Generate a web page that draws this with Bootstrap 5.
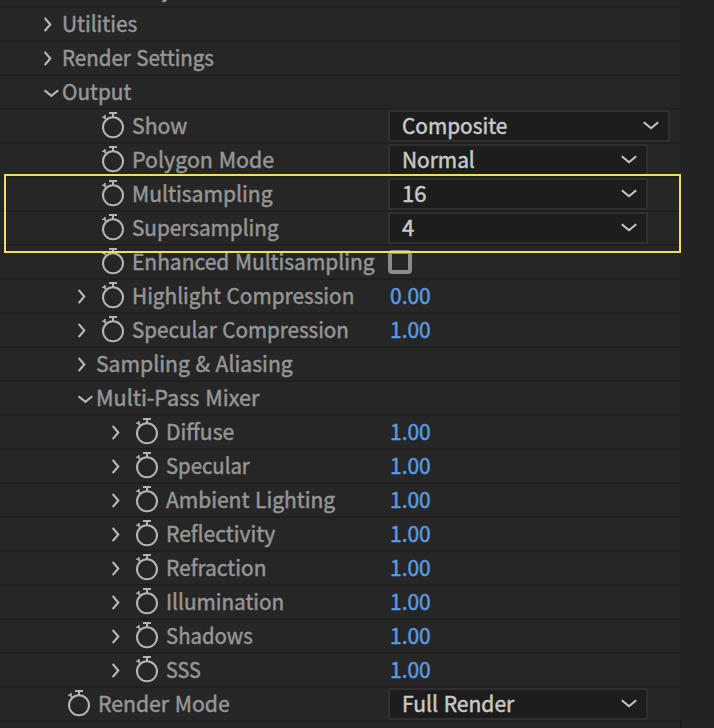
<!DOCTYPE html>
<html lang="en">
<head>
<meta charset="utf-8">
<meta name="viewport" content="width=device-width, initial-scale=1">
<title>Effect Controls</title>
<link href="https://cdn.jsdelivr.net/npm/bootstrap@5.3.0/dist/css/bootstrap.min.css" rel="stylesheet">
<style>
body{background:#232323;color:#969696;font:22px/32px "Noto Sans CJK SC","Noto Sans",sans-serif;height:728px;-webkit-text-stroke:.5px currentColor}
.panel{width:680px;height:728px;background:#262626}
.rows{margin-top:-28px}
.prop{height:34px;border-top:2px solid #1f1f1f;white-space:nowrap}
.prop-name{width:388px;padding-left:44px}
.lv1{padding-left:78px}
.lv2{padding-left:112px}
.chev{width:18px;height:18px;color:#b9b9b9}
.watch{width:24px;height:28px;margin:-2px 7px 0 5px;color:#b4b4b4}
.picker{width:260px;height:32px;padding:0 9px 0 12px;background:#1d1d1d;border:2px solid #303030;color:#c9c9c9}
.picker.wide{width:282px}
.num{color:#5a9ae0;padding-left:2px}
.tick{width:24px;height:24px;border:4px solid #8c8c8c;border-radius:4px}
.mark-box{left:4px;top:174px;width:677px;height:79px;border:2px solid #efdf61}
.lbl{display:block;transform-origin:0 50%;word-spacing:1px;margin-top:-4px}
.prop:first-child .lbl{margin-top:-6px}
.foot{left:680px;top:720px;width:34px;height:8px;border-left:2px solid #1d1d1d;background:#252525}
</style>
<script src="https://cdn.jsdelivr.net/npm/bootstrap@5.3.0/dist/js/bootstrap.bundle.min.js"></script>
</head>
<body class="m-0 overflow-hidden position-relative">
<svg class="d-none">
<symbol id="right" viewBox="0 0 18 18"><path d="M.7 3l5.6 6.5L.7 16" fill="none" stroke="currentColor" stroke-width="2.1"/></symbol>
<symbol id="down" viewBox="0 0 18 18"><path d="M.5 7.2l6.9 5.6 6.9-5.6" fill="none" stroke="currentColor" stroke-width="2.1"/></symbol>
<symbol id="watch" viewBox="0 0 24 28"><g fill="none" stroke="currentColor"><circle cx="12" cy="16.3" r="10" stroke-width="2.1"/><path d="M8 2h8M12 2v4.5" stroke-width="2"/><path d="M1.2 6.2h3.2M4 4v3.2M2.6 5.4l2.2 2.8" stroke-width="1.6"/></g></symbol>
<symbol id="drop" viewBox="0 0 16 10"><path d="M.8 1.2L8 7.2l7.2-6" fill="none" stroke="currentColor" stroke-width="2"/></symbol>
</svg>
<main class="panel overflow-hidden"><div class="rows" id="rows"></div></main>
<div class="mark-box position-absolute"></div>
<div class="foot position-absolute"></div>
<script>
// level, toggle (r = closed, d = open, blank = none), stopwatch, label, label width, value type, value, value width
const props=[
[0,'r',0,'Custom Layers',138],
[0,'r',0,'Utilities',75],
[0,'r',0,'Render Settings',152],
[0,'d',0,'Output',69],
[1,'',1,'Show',55,'wide','Composite',105],
[1,'',1,'Polygon Mode',142,'pick','Normal',73],
[1,'',1,'Multisampling',141,'pick','16',24],
[1,'',1,'Supersampling',147,'pick','4',12],
[1,'',1,'Enhanced Multisampling',243,'check'],
[1,'r',1,'Highlight Compression',222,'num','0.00',41],
[1,'r',1,'Specular Compression',217,'num','1.00',41],
[1,'r',0,'Sampling & Aliasing',197],
[1,'d',0,'Multi-Pass Mixer',163],
[2,'r',1,'Diffuse',68,'num','1.00',41],
[2,'r',1,'Specular',84,'num','1.00',41],
[2,'r',1,'Ambient Lighting',169,'num','1.00',41],
[2,'r',1,'Reflectivity',109,'num','1.00',41],
[2,'r',1,'Refraction',100,'num','1.00',41],
[2,'r',1,'Illumination',118,'num','1.00',41],
[2,'r',1,'Shadows',87,'num','1.00',41],
[2,'r',1,'SSS',35,'num','1.00',41],
[0,'',1,'Render Mode',132,'pick','Full Render',112],
[0,'',0,'',0]];
const icon=(id,cls)=>`<svg class="${cls} flex-shrink-0">${id?`<use href="#${id}"/>`:''}</svg>`;
const label=(t,w)=>`<span class="lbl" data-w="${w}">${t.replace('&','&amp;')}</span>`;
document.getElementById('rows').innerHTML=props.map(([lv,tg,sw,name,w,type,val,vw])=>{
  let v='';
  if(type==='pick'||type==='wide')v=`<div class="picker ${type} d-flex align-items-center justify-content-between">${label(val,vw)}<svg width="16" height="10"><use href="#drop"/></svg></div>`;
  if(type==='num')v=`<div class="num d-flex align-items-center">${label(val,vw)}</div>`;
  if(type==='check')v='<span class="tick"></span>';
  return `<div class="prop d-flex align-items-center"><div class="prop-name lv${lv} d-flex align-items-center flex-shrink-0">${icon(tg==='r'?'right':tg==='d'?'down':'','chev')}${sw?icon('watch','watch'):''}${label(name,w)}</div>${v}</div>`;
}).join('');
// fit every label to its measured width
document.querySelectorAll('.lbl').forEach(e=>{
  const w=e.offsetWidth;
  if(w)e.style.transform=`scaleX(${e.dataset.w/w})`;
});
</script>
</body>
</html>
